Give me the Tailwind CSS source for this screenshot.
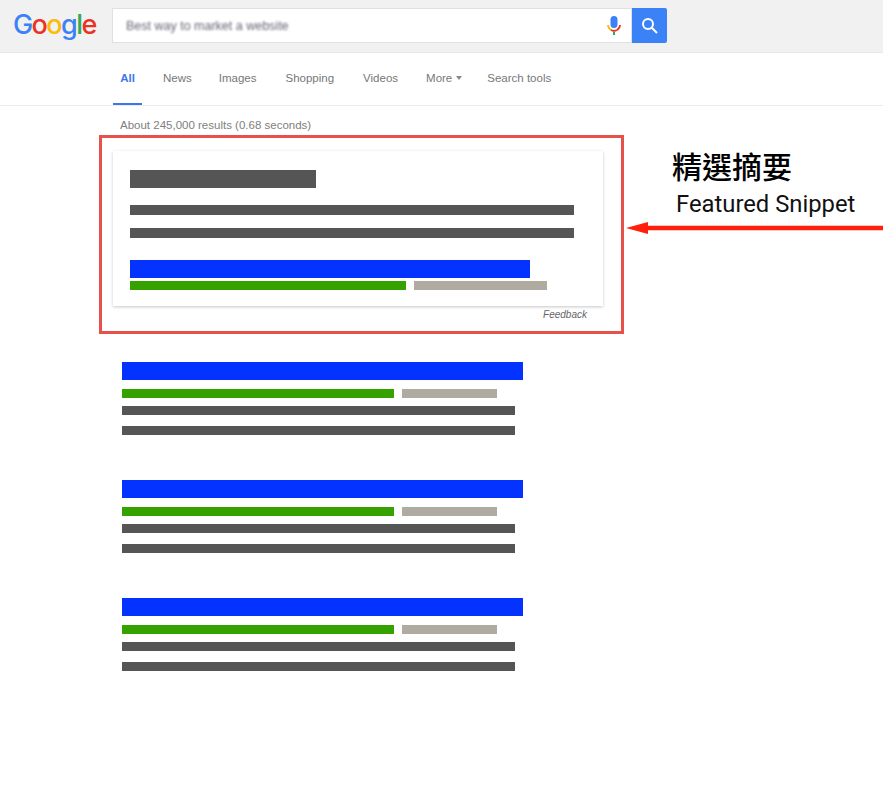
<!DOCTYPE html>
<html lang="en">
<head>
    <meta charset="UTF-8">
    <title>Featured Snippet</title>
    <script src="https://cdn.jsdelivr.net/npm/@tailwindcss/browser@4"></script>
</head>
<body class="bg-white font-['Liberation_Sans',Arial,sans-serif]">
<div class="w-[883px] h-[800px] relative overflow-hidden">

    <!-- header -->
    <div class="h-[53px] bg-[#f1f1f1] border-b border-[#e8e8e8] flex items-start">
        <div class="w-[112px] pl-[13px] pt-[8px] h-full">
            <span class="text-[27px] leading-[34px] tracking-[-1.6px] font-medium font-['Inter',sans-serif]"><span class="text-[#3b82f6]">G</span><span class="text-[#ea3323]">o</span><span class="text-[#fbbc05]">o</span><span class="text-[#3b82f6]">g</span><span class="text-[#34a853]">l</span><span class="text-[#ea3323]">e</span></span>
        </div>
        <div class="mt-[8px] w-[520px] h-[35px] bg-white border border-[#e0e0e0] flex items-center justify-between">
            <span class="pl-[13px] pt-[1px] text-[12.5px] text-[#667] blur-[1.2px]">Best way to market a website</span>
            <svg width="16" height="22" viewBox="0 0 16 22" class="mr-[9px]">
                <rect x="4.5" y="1" width="7" height="12" rx="3.5" fill="#3b82f6"/>
                <path d="M2 10a6 6 0 0 0 3 5" fill="none" stroke="#fbbc05" stroke-width="1.8"/>
                <path d="M14 10a6 6 0 0 1-3 5" fill="none" stroke="#ea3323" stroke-width="1.8"/>
                <path d="M5 15q3 1.6 6 0" fill="none" stroke="#ea3323" stroke-width="1.8"/>
                <rect x="7" y="16.5" width="2" height="3.5" fill="#34a853"/>
            </svg>
        </div>
        <div class="mt-[8px] w-[35px] h-[35px] bg-[#3b82f6] rounded-r-[2px] flex items-center justify-center">
            <svg width="18" height="18" viewBox="0 0 18 18" fill="none" stroke="#fff" stroke-width="2">
                <circle cx="7" cy="7" r="5"/>
                <path d="M10.8 10.8 16 16"/>
            </svg>
        </div>
    </div>

    <!-- tabs -->
    <div class="h-[53px] border-b border-[#ebebeb] flex pl-[113px] text-[11.5px] text-[#777]">
        <div class="w-[29px] h-[52px] border-b-[2px] border-[#3b78e7] flex justify-center pt-[17px] font-bold text-[#3b78e7]">All</div>
        <div class="ml-[21px] pt-[17px]">News</div>
        <div class="ml-[27px] pt-[17px]">Images</div>
        <div class="ml-[29px] pt-[17px]">Shopping</div>
        <div class="ml-[29px] pt-[17px]">Videos</div>
        <div class="ml-[28px] pt-[17px] flex items-start gap-[4px]">More <span class="mt-[6px] border-x-[3.5px] border-t-[4px] border-x-transparent border-t-[#888]"></span></div>
        <div class="ml-[25px] pt-[17px]">Search tools</div>
    </div>

    <p class="pl-[120px] pt-[12px] text-[11.5px] leading-[14px] text-[#808080]">About 245,000 results (0.68 seconds)</p>

    <!-- featured snippet -->
    <div class="ml-[99px] mt-[3px] w-[525px] h-[199px] border-[3px] border-[#e8504a] pl-[11px] pt-[13px]">
        <div class="w-[490px] h-[155px] bg-white shadow-[0_1px_3px_rgba(0,0,0,0.22)] pl-[17px] pt-[19px]">
            <div class="w-[186px] h-[18px] bg-[#555]"></div>
            <div class="w-[444px] h-[10px] bg-[#555] mt-[17px]"></div>
            <div class="w-[444px] h-[10px] bg-[#555] mt-[13px]"></div>
            <div class="w-[400px] h-[18px] bg-[#0433ff] mt-[22px]"></div>
            <div class="flex gap-[8px] mt-[3px]">
                <div class="w-[276px] h-[9px] bg-[#36a200]"></div>
                <div class="w-[133px] h-[9px] bg-[#afaba0]"></div>
            </div>
        </div>
        <p class="w-[474px] text-right text-[10px] italic text-[#666] mt-[1px]">Feedback</p>
    </div>

    <!-- results -->
    <div class="ml-[122px] mt-[28px] flex flex-col gap-[45px]">
        <div>
            <div class="w-[401px] h-[18px] bg-[#0433ff]"></div>
            <div class="flex gap-[8px] mt-[9px]">
                <div class="w-[272px] h-[9px] bg-[#36a200]"></div>
                <div class="w-[95px] h-[9px] bg-[#afaba0]"></div>
            </div>
            <div class="w-[393px] h-[9px] bg-[#555] mt-[8px]"></div>
            <div class="w-[393px] h-[9px] bg-[#555] mt-[11px]"></div>
        </div>
        <div>
            <div class="w-[401px] h-[18px] bg-[#0433ff]"></div>
            <div class="flex gap-[8px] mt-[9px]">
                <div class="w-[272px] h-[9px] bg-[#36a200]"></div>
                <div class="w-[95px] h-[9px] bg-[#afaba0]"></div>
            </div>
            <div class="w-[393px] h-[9px] bg-[#555] mt-[8px]"></div>
            <div class="w-[393px] h-[9px] bg-[#555] mt-[11px]"></div>
        </div>
        <div>
            <div class="w-[401px] h-[18px] bg-[#0433ff]"></div>
            <div class="flex gap-[8px] mt-[9px]">
                <div class="w-[272px] h-[9px] bg-[#36a200]"></div>
                <div class="w-[95px] h-[9px] bg-[#afaba0]"></div>
            </div>
            <div class="w-[393px] h-[9px] bg-[#555] mt-[8px]"></div>
            <div class="w-[393px] h-[9px] bg-[#555] mt-[11px]"></div>
        </div>
    </div>

    <!-- annotation -->
    <div class="absolute left-[672px] top-[147px] text-[30px] leading-[36px] font-medium text-black font-['Noto_Sans_CJK_TC',sans-serif]">精選摘要</div>
    <div class="absolute left-[676px] top-[189px] text-[23.8px] leading-[30px] text-[#111] font-['Roboto',sans-serif]">Featured Snippet</div>
    <svg class="absolute left-[625px] top-[220px]" width="260" height="16" viewBox="0 0 260 16">
        <path d="M259 5.8H23V2L1 8l22 6V10.2h236z" fill="#ff1f0a"/>
    </svg>
</div>
</body>
</html>
